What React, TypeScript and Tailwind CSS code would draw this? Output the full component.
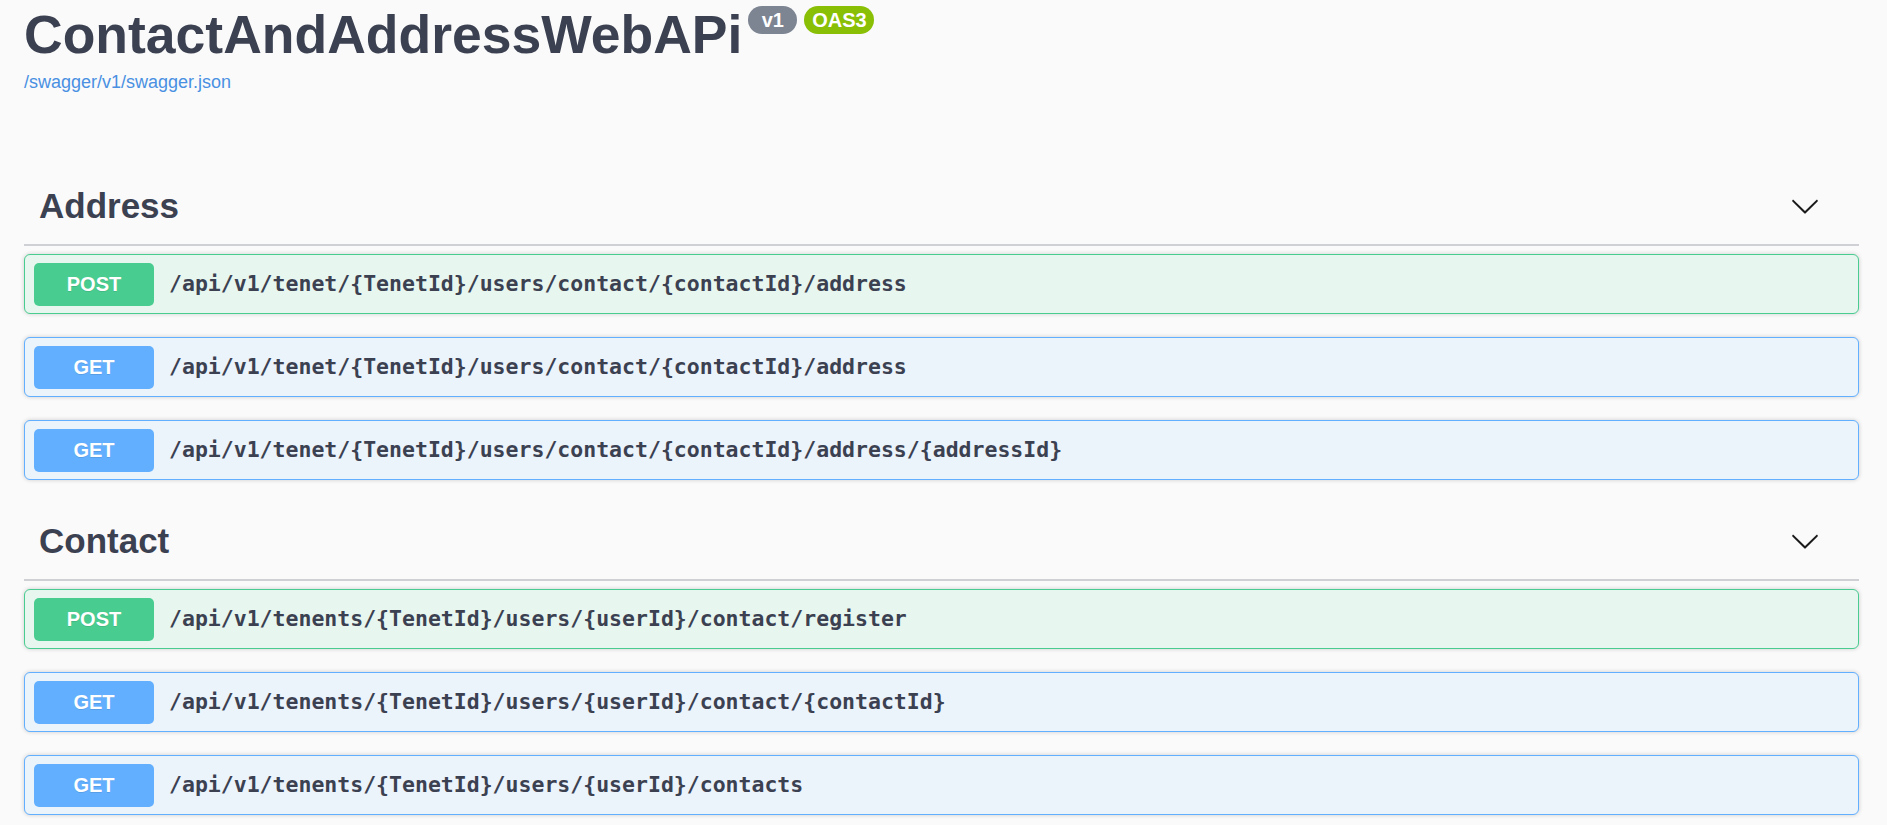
import React from 'react';

type Method = 'POST' | 'GET';

interface Operation {
  method: Method;
  path: string;
}

interface TagSection {
  name: string;
  operations: Operation[];
}

const sections: TagSection[] = [
  {
    name: 'Address',
    operations: [
      { method: 'POST', path: '/api/v1/tenet/{TenetId}/users/contact/{contactId}/address' },
      { method: 'GET', path: '/api/v1/tenet/{TenetId}/users/contact/{contactId}/address' },
      { method: 'GET', path: '/api/v1/tenet/{TenetId}/users/contact/{contactId}/address/{addressId}' },
    ],
  },
  {
    name: 'Contact',
    operations: [
      { method: 'POST', path: '/api/v1/tenents/{TenetId}/users/{userId}/contact/register' },
      { method: 'GET', path: '/api/v1/tenents/{TenetId}/users/{userId}/contact/{contactId}' },
      { method: 'GET', path: '/api/v1/tenents/{TenetId}/users/{userId}/contacts' },
    ],
  },
];

const Chevron = () => (
  <svg width="30" height="30" viewBox="0 0 20 20" className="text-[#1a1a1a]">
    <path
      fill="currentColor"
      d="M17.418 6.109c.272-.268.709-.268.979 0s.271.701 0 .969l-7.908 7.83c-.27.268-.707.268-.979 0l-7.908-7.83c-.27-.268-.27-.701 0-.969.271-.268.709-.268.979 0L10 13.25l7.418-7.141z"
    />
  </svg>
);

const OperationRow = ({ op }: { op: Operation }) => {
  const isPost = op.method === 'POST';
  return (
    <div
      className={`flex items-center h-[60px] mb-[23px] px-[9px] rounded-[6px] border shadow-[0_0_4px_rgba(0,0,0,0.19)] ${
        isPost ? 'bg-[#e8f6f0] border-[#49cc90]' : 'bg-[#ebf3fb] border-[#61affe]'
      }`}
    >
      <span
        className={`flex items-center justify-center w-[120px] h-[43px] rounded-[5px] text-white text-[20px] font-bold [text-shadow:0_1px_0_rgba(0,0,0,0.1)] ${
          isPost ? 'bg-[#49cc90]' : 'bg-[#61affe]'
        }`}
      >
        {op.method}
      </span>
      <span className="ml-[15px] font-['DejaVu_Sans_Mono',monospace] font-bold text-[21.5px] text-[#3b4151]">
        {op.path}
      </span>
    </div>
  );
};

export default function App() {
  return (
    <div className="min-h-screen bg-[#fafafa] pl-[24px] pr-[28px] font-['Liberation_Sans',Arial,sans-serif] text-[#3b4151]">
      {/* Info header */}
      <div className="flex items-start">
        <h2 className="mt-[4px] text-[53.5px] leading-[62px] font-bold text-[#3b4151]">ContactAndAddressWebAPi</h2>
        <div className="flex gap-[7px] ml-[6px] mt-[6px]">
          <span className="flex items-center justify-center w-[49px] h-[28px] rounded-full bg-[#7d8492] text-white text-[20px] font-bold">
            v1
          </span>
          <span className="flex items-center justify-center w-[70px] h-[28px] rounded-full bg-[#89bf04] text-white text-[20px] font-bold">
            OAS3
          </span>
        </div>
      </div>
      <a className="block mt-[5px] text-[18px] leading-[22px] text-[#4990e2]">/swagger/v1/swagger.json</a>

      <div className="mt-[75px]">
        {sections.map((section) => (
          <div key={section.name}>
            <div className="flex items-center justify-between h-[78px] pl-[15px] pr-[39px] border-b-2 border-[#cfd0d3]">
              <h3 className="text-[35px] font-bold text-[#3b4151]">{section.name}</h3>
              <Chevron />
            </div>
            <div className="mt-[8px]">
              {section.operations.map((op, idx) => (
                <OperationRow key={idx} op={op} />
              ))}
            </div>
          </div>
        ))}
      </div>
    </div>
  );
}
